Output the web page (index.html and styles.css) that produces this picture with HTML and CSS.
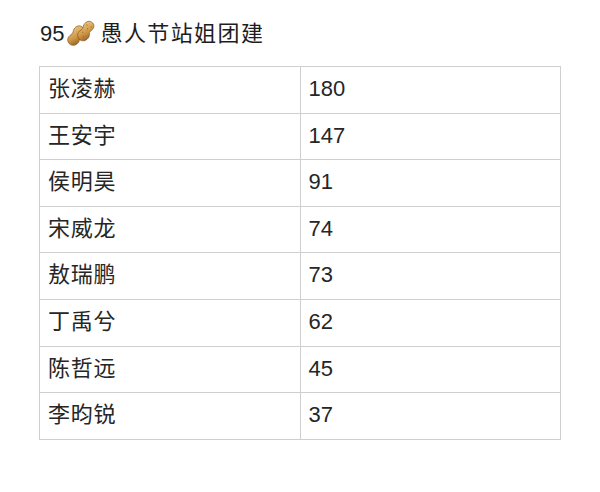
FILE: index.html
```html
<!DOCTYPE html>
<html lang="zh">
<head>
<meta charset="utf-8">
<link rel="stylesheet" href="styles.css">
</head>
<body>
<div class="page">
  <h1 class="title"><span class="num">95</span><svg class="peanut" viewBox="0 0 32 32" width="30" height="30">
      <defs>
        <linearGradient id="pg" x1="0" y1="0" x2="1" y2="1">
          <stop offset="0" stop-color="#ecc886"/>
          <stop offset="0.55" stop-color="#cf9747"/>
          <stop offset="1" stop-color="#8d5a20"/>
        </linearGradient>
      </defs>
      <g transform="rotate(35 10 18)">
        <path d="M10 6c4 0 5.5 3 5 6.5-.4 2.2-1.5 3 .2 5.3 1.5 2 1.8 3.5 1.2 6-1 4-5 6-8.3 4.3C4.7 26.4 4 23 5.4 19.8c1-2.2.4-3.2-.4-5.3C3.7 10.5 6 6 10 6z" fill="url(#pg)" stroke="#7a4a18" stroke-width="0.6"/>
      </g>
      <g transform="rotate(35 20 14)">
        <path d="M20 1c4 0 5.5 3 5 6.5-.4 2.2-1.5 3 .2 5.3 1.5 2 1.8 3.5 1.2 6-1 4-5 6-8.3 4.3-3.4-1.7-4.1-5.1-2.7-8.3 1-2.2.4-3.2-.4-5.3C13.7 5.5 16 1 20 1z" fill="url(#pg)" stroke="#7a4a18" stroke-width="0.6"/>
        <path d="M17 6l1 1M20 9l1 1M18 15l1 1M21 18l1 1M22 5l1 1" stroke="#9b6526" stroke-width="0.8"/>
      </g>
    </svg><span class="cjk">愚人节站姐团建</span></h1>
  <table class="rank">
    <tbody>
      <tr><td class="name">张凌赫</td><td>180</td></tr>
      <tr><td class="name">王安宇</td><td>147</td></tr>
      <tr><td class="name">侯明昊</td><td>91</td></tr>
      <tr><td class="name">宋威龙</td><td>74</td></tr>
      <tr><td class="name">敖瑞鹏</td><td>73</td></tr>
      <tr><td class="name">丁禹兮</td><td>62</td></tr>
      <tr><td class="name">陈哲远</td><td>45</td></tr>
      <tr><td class="name">李昀锐</td><td>37</td></tr>
    </tbody>
  </table>
</div>
</body>
</html>
```
FILE: styles.css
```css
html, body {
  margin: 0;
  padding: 0;
  background: #ffffff;
}
body {
  font-family: "Liberation Sans", "Noto Sans CJK SC", sans-serif;
  color: #222222;
}
.page {
  padding: 19px 0 0 39px;
}
.title {
  margin: 0 0 17px 1px;
  font-size: 22px;
  font-weight: normal;
  line-height: 30px;
  height: 30px;
  display: flex;
  align-items: center;
  color: #1e1e1e;
}
.peanut {
  margin: 0 4px 0 2px;
}
.cjk {
  letter-spacing: 1.4px;
}
.rank {
  border-collapse: collapse;
  table-layout: fixed;
  width: 522px;
}
.rank td {
  border: 1px solid #cfcfcf;
  padding: 9px 0 11.6px 8px;
  line-height: 25px;
  height: 25px;
  font-size: 22px;
  color: #262626;
  vertical-align: middle;
  width: 50%;
}
.rank td.name {
  letter-spacing: 0.7px;
}
```
